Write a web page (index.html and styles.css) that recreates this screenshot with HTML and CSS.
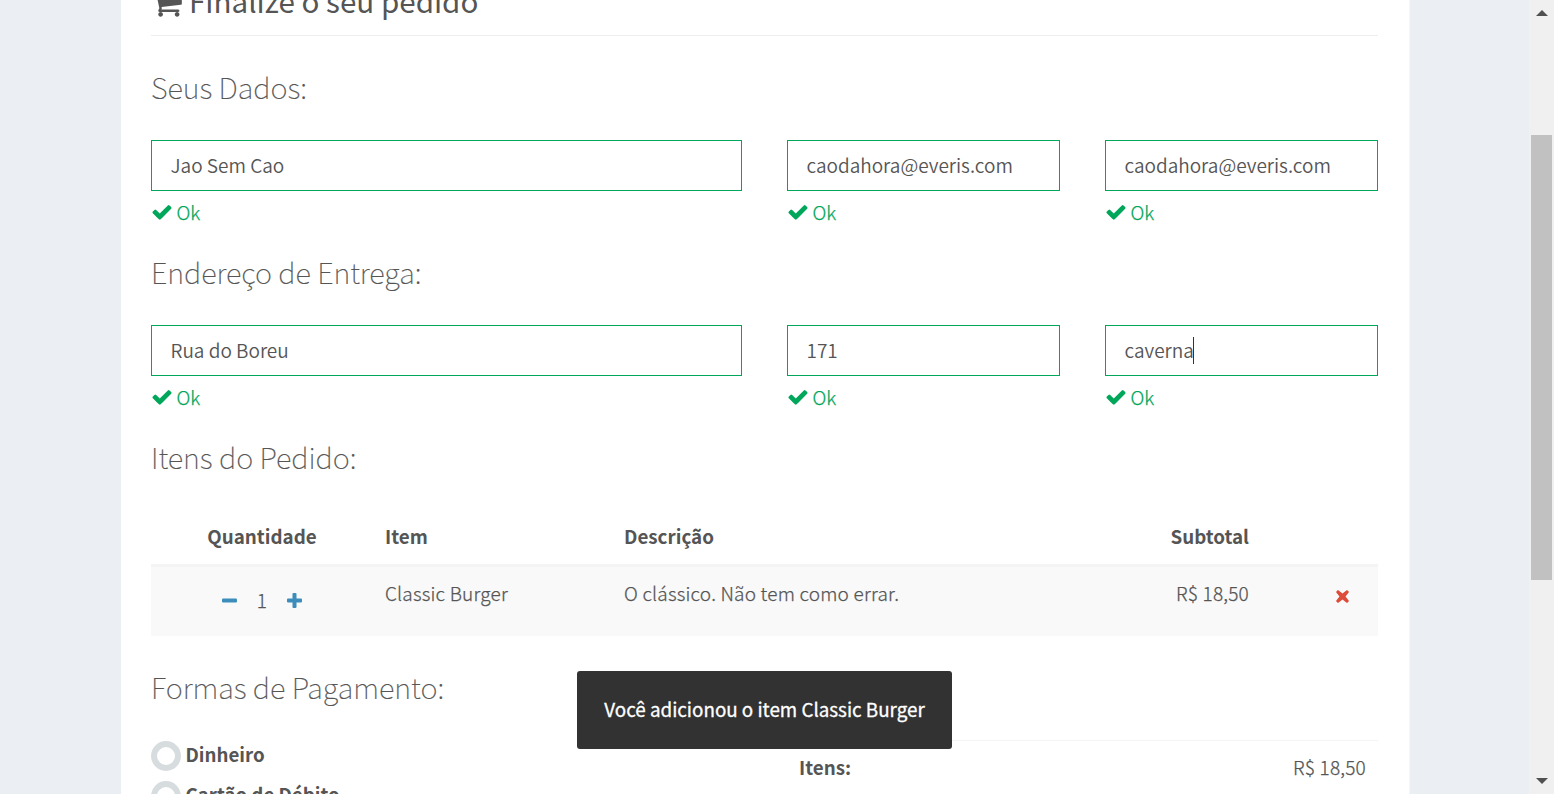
FILE: index.html
```html
<!DOCTYPE html>
<html lang="pt-BR">
<head>
<meta charset="utf-8">
<title>Finalize o seu pedido</title>
<link rel="stylesheet" href="styles.css">
</head>
<body>
<svg class="defs" width="0" height="0">
  <symbol id="check" viewBox="0 0 1792 1792"><path d="M1671 566q0 40-28 68l-724 724-136 136q-28 28-68 28t-68-28l-136-136-362-362q-28-28-28-68t28-68l136-136q28-28 68-28t68 28l294 295 656-657q28-28 68-28t68 28l136 136q28 28 28 68z"/></symbol>
  <symbol id="cart" viewBox="0 0 1792 1792"><path d="M704 1536q0 52-38 90t-90 38-90-38-38-90 38-90 90-38 90 38 38 90zm896 0q0 52-38 90t-90 38-90-38-38-90 38-90 90-38 90 38 38 90zm128-1088v512q0 24-16.500 42.500t-40.500 21.500l-1044 122q13 60 13 70 0 16-24 64h920q26 0 45 19t19 45-19 45-45 19h-1024q-26 0-45-19t-19-45q0-11 8-31.500t16-36 21.500-40 15.500-29.500l-177-823h-204q-26 0-45-19t-19-45 19-45 45-19h256q16 0 28.500 6.500t19.500 15.500 13 24.500 8 26 5.500 29.500 4.500 26h1201q26 0 45 19t19 45z"/></symbol>
  <symbol id="minus" viewBox="0 0 15 15"><rect y="5.500" width="15" height="4" rx="1"/></symbol>
  <symbol id="plus" viewBox="0 0 15 15"><path d="M6.500 0h2q1 0 1 1v4.500h4.500q1 0 1 1v2q0 1-1 1h-4.500v4.500q0 1-1 1h-2q-1 0-1-1v-4.500h-4.500q-1 0-1-1v-2q0-1 1-1h4.500v-4.500q0-1 1-1z"/></symbol>
  <symbol id="times" viewBox="0 0 12 12"><path d="M2.200.3 6 3.200 9.800.3Q10.300 0 10.700.4L11.700 1.400Q12 1.800 11.700 2.200L8.800 6l2.900 3.800Q12 10.300 11.600 10.700L10.600 11.700Q10.200 12 9.800 11.700L6 8.800 2.200 11.700Q1.700 12 1.300 11.600L.3 10.600Q0 10.200.3 9.800L3.200 6 .3 2.200Q0 1.700.4 1.300L1.400.3Q1.800 0 2.200.3z"/></symbol>
</svg>
<div class="app">
  <main class="page">
    <h2 class="title"><svg class="cart"><use href="#cart"/></svg><span>Finalize o seu pedido</span></h2>
    <section class="group">
      <h3 class="heading">Seus Dados:</h3>
      <div class="fields">
        <div><div class="input">Jao Sem Cao</div><div class="ok"><svg><use href="#check"/></svg>Ok</div></div>
        <div><div class="input">caodahora@everis.com</div><div class="ok"><svg><use href="#check"/></svg>Ok</div></div>
        <div><div class="input">caodahora@everis.com</div><div class="ok"><svg><use href="#check"/></svg>Ok</div></div>
      </div>
    </section>
    <section class="group">
      <h3 class="heading">Endereço de Entrega:</h3>
      <div class="fields">
        <div><div class="input">Rua do Boreu</div><div class="ok"><svg><use href="#check"/></svg>Ok</div></div>
        <div><div class="input">171</div><div class="ok"><svg><use href="#check"/></svg>Ok</div></div>
        <div><div class="input">caverna<i class="caret"></i></div><div class="ok"><svg><use href="#check"/></svg>Ok</div></div>
      </div>
    </section>
    <section class="order">
      <h3 class="heading">Itens do Pedido:</h3>
      <div class="row thead"><span class="center">Quantidade</span><span>Item</span><span>Descrição</span><span class="right">Subtotal</span><span></span></div>
      <div class="row tbody">
        <span class="qty"><svg><use href="#minus"/></svg><b>1</b><svg><use href="#plus"/></svg></span>
        <span>Classic Burger</span><span>O clássico. Não tem como errar.</span><span class="right">R$ 18,50</span>
        <span class="remove"><svg><use href="#times"/></svg></span>
      </div>
    </section>
    <section class="payment">
      <div>
        <h3 class="heading">Formas de Pagamento:</h3>
        <div class="radio"><i></i><span>Dinheiro</span></div>
        <div class="radio"><i></i><span>Cartão de Débito</span></div>
      </div>
      <div class="totals"><b>Itens:</b><span>R$ 18,50</span></div>
    </section>
  </main>
  <aside class="scrollbar"><i class="up"></i><i class="thumb"></i><i class="down"></i></aside>
</div>
<div class="snack">Você adicionou o item Classic Burger</div>
</body>
</html>
```
FILE: styles.css
```css
* { box-sizing: border-box; }
body {
  margin: 0;
  height: 794px;
  overflow: hidden;
  background: #ebeff3;
  color: #555;
  font: 300 19px/28px "Noto Sans CJK SC", "Noto Sans CJK JP", sans-serif;
  letter-spacing: .2px;
}
.defs { position: absolute; }
svg { fill: currentColor; flex: none; }
.app { display: flex; height: 794px; }
.page {
  width: 1289px;
  height: 794px;
  margin-left: 121px;
  padding: 0 31px 0 30px;
  background: #fff;
  border-right: 1px solid #f4f6f8;
  overflow: hidden;
}
.title {
  display: flex;
  align-items: flex-end;
  gap: 6px;
  height: 36px;
  margin: 0;
  padding-bottom: 13px;
  border-bottom: 1px solid #eee;
  font-size: 29.6px;
  font-weight: 400;
  line-height: 42px;
  letter-spacing: 0;
  white-space: nowrap;
}
.cart { width: 33px; height: 33px; margin: 0 0 3px -1px; }
.group { height: 185px; }
.heading {
  margin: 0;
  height: 104px;
  padding-top: 30px;
  font-size: 29px;
  font-weight: 100;
  line-height: 40px;
  letter-spacing: -.03px;
  white-space: nowrap;
  -webkit-text-stroke: .2px #555;
}
.fields { display: grid; grid-template-columns: 591px 273px 273px; column-gap: 45px; }
.input {
  display: flex;
  align-items: center;
  height: 51px;
  padding: 0 0 2px 18.5px;
  border: 1px solid #00a65a;
  font-weight: 350;
  letter-spacing: 0;
}
.caret { width: 1px; height: 27px; margin: 2px 0 0 -1px; background: #333; }
.ok { display: flex; align-items: center; gap: 3.500px; height: 28px; margin-top: 7px; color: #00a65a; letter-spacing: 0; -webkit-text-stroke: .25px #00a65a; }
.ok svg { width: 22px; height: 22px; }
.order { height: 230px; }
.row { display: grid; grid-template-columns: 222px 239px 462px 187px 117px; }
.row > span { padding: 0 12px; }
.row .center { text-align: center; }
.row .right { text-align: right; }
.thead { height: 57px; padding-top: 12px; border-bottom: 3px solid #f4f4f4; font-weight: 700; font-size: 18.8px; letter-spacing: 0; }
.tbody { height: 69px; padding-top: 12px; background: #f9f9f9; -webkit-text-stroke: .25px #555; }
.qty { display: flex; align-items: center; justify-content: center; height: 42px; gap: 20px; }
.qty b { font-weight: 300; }
.qty svg { width: 15px; height: 15px; color: #3c8dbc; }
.remove svg { display: block; width: 13px; height: 13px; margin: 11px 0 0 63px; color: #dd4b39; }
.tbody svg { -webkit-text-stroke: 0; }
.payment { display: grid; grid-template-columns: 591px 591px; column-gap: 45px; }
.payment .heading { height: 105px; }
.radio { display: flex; gap: 4.500px; height: 40px; font-weight: 700; font-size: 18.7px; line-height: 26px; letter-spacing: 0; }
.radio i { width: 30px; height: 30px; border: 6px solid #d7dcde; border-radius: 50%; }
.totals { display: flex; justify-content: space-between; margin-top: 104px; padding: 12px; border-top: 1px solid #f4f4f4; }
.totals span { -webkit-text-stroke: .25px #555; }
.totals b { font-weight: 700; font-size: 18.8px; letter-spacing: 0; }
.scrollbar { display: flex; flex-direction: column; align-items: center; width: 25px; height: 794px; margin-left: auto; background: #f0f0f0; }
.scrollbar i { border: 0 solid transparent; }
.scrollbar .up { margin-top: 10px; border-width: 0 6px 6px; border-bottom-color: #505050; }
.scrollbar .thumb { width: 21px; height: 445px; margin-top: 119px; background: #c1c1c1; }
.scrollbar .down { margin-top: 198px; border-width: 6px 6px 0; border-top-color: #505050; }
.snack {
  position: absolute;
  left: 577px;
  top: 671px;
  width: 375px;
  height: 78px;
  border-radius: 3px;
  background: #323232;
  color: #fff;
  font-weight: 400;
  font-size: 18.8px;
  letter-spacing: 0;
  line-height: 76px;
  text-align: center;
  white-space: nowrap;
  -webkit-text-stroke: .3px #fff;
}
```
